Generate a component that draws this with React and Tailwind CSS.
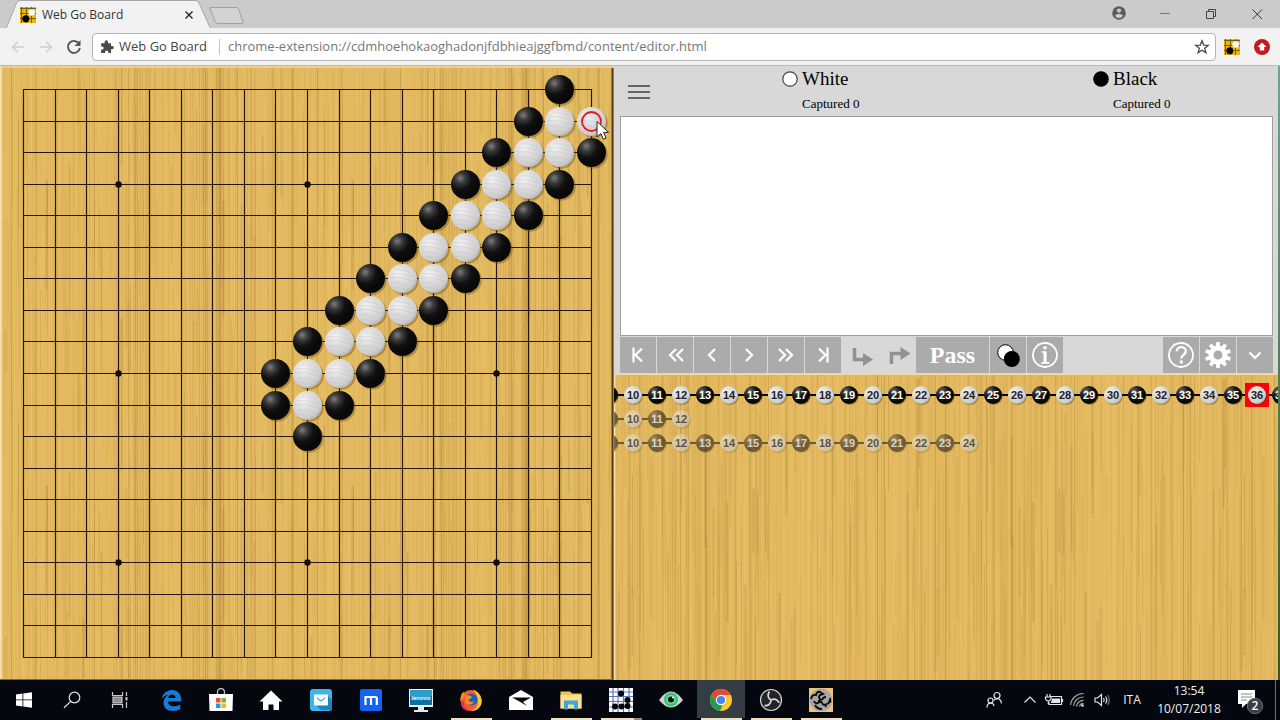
import React from 'react';

function makeRandom(seed) {
  let s = seed;
  return () => {
    s = (s * 16807) % 2147483647;
    return s / 2147483647;
  };
}

const TILE = 306;

function makeStreaks(seed, count) {
  const rnd = makeRandom(seed);
  return Array.from({ length: count }, (_, i) => {
    const long = i % 3 === 0;
    return {
      x: Math.floor(rnd() * TILE) + 0.5,
      y: long ? -10 : rnd() * TILE - 40,
      length: long ? TILE + 20 : 50 + rnd() * 140,
      width: rnd() > 0.7 ? 2 : 1,
      dark: rnd() > 0.35,
      opacity: 0.05 + rnd() * rnd() * 0.26,
    };
  });
}

function Wood({ id, seed }) {
  return (
    <>
      <defs>
        <pattern id={id} width={TILE} height={TILE} patternUnits="userSpaceOnUse">
          <rect width={TILE} height={TILE} fill="#e4ba60" />
          {makeStreaks(seed, 420).map((s, i) => (
            <line key={i} x1={s.x} x2={s.x} y1={s.y} y2={s.y + s.length} strokeWidth={s.width} stroke={s.dark ? '#9c7428' : '#f1cd80'} strokeOpacity={s.opacity} />
          ))}
        </pattern>
      </defs>
      <rect width="100%" height="100%" fill={`url(#${id})`} />
    </>
  );
}

function StoneDefs() {
  return (
    <defs>
      <radialGradient id="blackStone" cx="0.32" cy="0.28" r="0.6">
        <stop offset="0" stopColor="#7d7d7d" />
        <stop offset="0.3" stopColor="#3a3a3a" />
        <stop offset="0.65" stopColor="#101010" />
        <stop offset="1" stopColor="#090909" />
      </radialGradient>
      <radialGradient id="whiteStone" cx="0.36" cy="0.32" r="0.7">
        <stop offset="0" stopColor="#f2f2f2" />
        <stop offset="0.5" stopColor="#dadada" />
        <stop offset="0.85" stopColor="#cfcfcf" />
        <stop offset="1" stopColor="#b9b9b9" />
      </radialGradient>
    </defs>
  );
}

const ORIGIN = 23.5;
const STEP = 568 / 18;
const at = (n) => Math.floor(ORIGIN + n * STEP) + 0.5;

const BLACK = [[17, 0], [16, 1], [8, 10], [10, 10], [9, 11]];
const WHITE = [[17, 1], [18, 1], [9, 10]];
for (let r = 2; r <= 9; r += 1) {
  BLACK.push([17 - r, r], [20 - r, r]);
  WHITE.push([18 - r, r], [19 - r, r]);
}
const STARS = [3, 9, 15].flatMap((c) => [3, 9, 15].map((r) => [c, r]));
const LINES = Array.from({ length: 19 }, (_, i) => i);

function BoardStone({ c, r, color }) {
  const x = at(c);
  const y = at(r);
  return (
    <g>
      <circle cx={x + 1.8} cy={y + 1.8} r="14.5" fill="#6b4a12" fillOpacity="0.4" />
      <circle cx={x} cy={y} r="14.5" fill={color === 'black' ? 'url(#blackStone)' : 'url(#whiteStone)'} />
      {color === 'white' && (
        <path
          d={`M${x - 11} ${y - 5}q11 -1 21 3M${x - 13} ${y - 1}q13 -1 25 4M${x - 12} ${y + 4}q11 0 22 4M${x - 8} ${y + 9}q8 0 13 2M${x - 6} ${y - 9}q8 0 14 3`}
          fill="none"
          stroke="#b4b4b4"
          strokeOpacity="0.35"
          strokeWidth="0.8"
        />
      )}
    </g>
  );
}

function Board() {
  return (
    <svg viewBox="0 0 614 614" className="block aspect-square h-full shrink-0" role="img" aria-label="Go board">
      <StoneDefs />
      <Wood id="boardWood" seed={4711} />
      <path d="M0 1H614" stroke="#e9cf95" strokeWidth="2" />
      <path d="M1 0V614" stroke="#f3dfae" strokeWidth="2" />
      <path d="M612.5 2V614" stroke="#5a3c12" strokeWidth="2" />
      <path d="M0 613.5H614" stroke="#8a6526" />
      {LINES.map((i) => (
        <path key={i} d={`M${at(i)} 23V592M23 ${at(i)}H592`} stroke="#24140a" strokeWidth="1.2" />
      ))}
      {STARS.map(([c, r]) => (
        <circle key={`${c}-${r}`} cx={at(c)} cy={at(r)} r="3.2" fill="#120a04" />
      ))}
      {WHITE.map(([c, r]) => <BoardStone key={`${c}-${r}`} c={c} r={r} color="white" />)}
      {BLACK.map(([c, r]) => <BoardStone key={`${c}-${r}`} c={c} r={r} color="black" />)}
      <circle cx={at(18)} cy={at(1)} r="9.5" fill="none" stroke="#e8141e" strokeWidth="1.8" />
      <path d="M597 55.5v15.5l3.800-3.500 2.600 5.800 2.800-1.200-2.600-5.700h5z" fill="#fff" stroke="#222" strokeWidth="1" />
    </svg>
  );
}

function TreeNode({ n, y, faded }) {
  const x = 19 + (n - 10) * 24;
  const black = n % 2 === 1;
  return (
    <g>
      {n === 36 && <rect x={x - 12} y={y - 12} width="24" height="24" fill="#fb0007" />}
      <g opacity={faded ? 0.52 : 1}>
        <circle cx={x + 0.8} cy={y + 0.8} r="9" fill="#5c410f" fillOpacity="0.5" />
        <circle cx={x} cy={y} r="9" fill={black ? 'url(#blackStone)' : 'url(#whiteStone)'} />
      </g>
      {n > 9 && (
        <text x={x} y={y + 4} textAnchor="middle" fontSize="11" fontWeight="700" fill={black ? '#fff' : '#222'} fillOpacity={faded ? 0.72 : 1}>{n}</text>
      )}
    </g>
  );
}

function TreeRow({ y, last, faded }) {
  const nodes = Array.from({ length: last - 8 }, (_, i) => i + 9);
  return (
    <g>
      {nodes.slice(1).map((n) => (
        <path key={n} d={`M${19 + (n - 11) * 24 + 9} ${y}h6`} stroke="#000" strokeOpacity={faded ? 0.5 : 1} strokeWidth="2" />
      ))}
      {nodes.map((n) => <TreeNode key={n} n={n} y={y} faded={faded} />)}
    </g>
  );
}

function MoveTree() {
  return (
    <div className="min-h-0 flex-1 overflow-hidden border-t border-[#efd9a6]">
      <svg className="block h-full w-full font-['Liberation_Sans',Arial,sans-serif]" role="img" aria-label="Move tree">
        <Wood id="treeWood" seed={9241} />
        <path d="M0 0V1000" stroke="#f3dfae" strokeWidth="3" />
        <TreeRow y={20} last={37} />
        <TreeRow y={44} last={12} faded />
        <TreeRow y={68} last={24} faded />
      </svg>
    </div>
  );
}

function Player({ name, fill }) {
  return (
    <div className="grid grid-cols-[20px_auto] content-start justify-start pl-[126px] pt-px">
      <svg className="mt-1 h-4 w-4" viewBox="0 0 16 16" aria-hidden="true">
        <circle cx="8" cy="8" r="7.2" fill={fill} stroke={fill === '#fff' ? '#444' : '#000'} strokeWidth="1.2" />
      </svg>
      <span className="text-[19px] leading-6">{name}</span>
      <span className="col-start-2 text-[13px] leading-[26px]">Captured 0</span>
    </div>
  );
}

function ToolButton({ label, children, wide }) {
  return (
    <button type="button" aria-label={label} className={`flex h-9 items-center justify-center bg-[#ababab] text-white ${wide ? 'w-[73px]' : 'w-9'}`}>
      {children}
    </button>
  );
}

function Stroke({ d }) {
  return (
    <svg className="h-9 w-9" viewBox="0 0 36 36" fill="none" stroke="currentColor" strokeWidth="2.2" aria-hidden="true">
      <path d={d} />
    </svg>
  );
}

const NAV = [
  ['First move', 'M13.500 10.500V25.500M22 11.500l-6.500 6.500 6.500 6.500'],
  ['Back ten moves', 'M19 12l-6 6 6 6M26 12l-6 6 6 6'],
  ['Previous move', 'M21 12l-6 6 6 6'],
  ['Next move', 'M15 12l6 6-6 6'],
  ['Forward ten moves', 'M11 12l6 6-6 6M18 12l6 6-6 6'],
  ['Last move', 'M22.500 10.500V25.500M14 11.500l6.500 6.500-6.500 6.500'],
];

const TEETH = Array.from({ length: 10 }, (_, i) => i * 36);

function EditorToolbar() {
  return (
    <div className="mt-px flex h-[37px] gap-px pl-[6px] pr-[5px]">
      {NAV.map(([label, d]) => <ToolButton key={label} label={label}><Stroke d={d} /></ToolButton>)}
      <button type="button" disabled aria-label="Previous variation" className="h-9 w-9 text-[#919191]">
        <svg className="h-9 w-9" viewBox="0 0 36 36" aria-hidden="true">
          <path d="M12.500 11V22.500H23" fill="none" stroke="currentColor" strokeWidth="3.500" />
          <path d="M21 16l10 6.500-10 6.500z" fill="currentColor" />
        </svg>
      </button>
      <button type="button" disabled aria-label="Next variation" className="h-9 w-9 text-[#919191]">
        <svg className="h-9 w-9" viewBox="0 0 36 36" aria-hidden="true">
          <path d="M12.500 27V16.500H23" fill="none" stroke="currentColor" strokeWidth="3.500" />
          <path d="M21.500 10l10 6.500-10 6.500z" fill="currentColor" />
        </svg>
      </button>
      <ToolButton wide><span className="text-2xl font-bold">Pass</span></ToolButton>
      <ToolButton label="Edit stones">
        <svg className="h-9 w-9" viewBox="0 0 36 36" aria-hidden="true">
          <circle cx="15.500" cy="15.500" r="7.800" fill="#fff" stroke="#000" />
          <circle cx="21.800" cy="22" r="8" fill="#000" />
        </svg>
      </ToolButton>
      <ToolButton label="Game info">
        <svg className="h-9 w-9" viewBox="0 0 36 36" fill="none" stroke="currentColor" aria-hidden="true">
          <circle cx="18" cy="18" r="12" strokeWidth="1.800" />
          <circle cx="18" cy="10.800" r="1.800" fill="currentColor" stroke="none" />
          <path d="M14.500 15H18.500V25" strokeWidth="1.600" />
          <path d="M18 15V26" strokeWidth="3" />
          <path d="M14 26H22.500" strokeWidth="1.600" />
        </svg>
      </ToolButton>
      <div className="flex-1" />
      <ToolButton label="Help">
        <svg className="h-9 w-9" viewBox="0 0 36 36" fill="none" stroke="currentColor" aria-hidden="true">
          <circle cx="18" cy="18" r="12" strokeWidth="1.800" />
          <path d="M13.800 14.200c0-5.400 9-5.400 9 0 0 3.800-4.500 3.600-4.500 7.300" strokeWidth="2.400" />
          <circle cx="18.300" cy="25" r="1.700" fill="currentColor" stroke="none" />
        </svg>
      </ToolButton>
      <ToolButton label="Settings">
        <svg className="h-9 w-9" viewBox="0 0 36 36" aria-hidden="true">
          <circle cx="18" cy="18" r="7" fill="none" stroke="#fff" strokeWidth="5" />
          {TEETH.map((a) => <path key={a} d="M15.800 10L16.300 5H19.700L20.200 10z" fill="#fff" transform={`rotate(${a} 18 18)`} />)}
        </svg>
      </ToolButton>
      <ToolButton label="More"><Stroke d="M12.500 15.500l5.500 5.500 5.500-5.500" /></ToolButton>
    </div>
  );
}

function EditorPanel() {
  return (
    <section className="flex min-w-0 flex-1 flex-col bg-[#d8d8d8] font-['Liberation_Serif','Times_New_Roman',serif] text-black">
      <header className="flex h-[50px]">
        <button type="button" aria-label="Menu" className="ml-3 mr-1 flex h-12 w-[26px] flex-col items-center justify-center gap-1 pt-1">
          <span className="h-[2px] w-[22px] bg-[#666]" />
          <span className="h-[2px] w-[22px] bg-[#666]" />
          <span className="h-[2px] w-[22px] bg-[#666]" />
        </button>
        <div className="grid flex-1 grid-cols-2">
          <Player name="White" fill="#fff" />
          <Player name="Black" fill="#000" />
        </div>
      </header>
      <textarea aria-label="Comments" className="ml-[6px] mr-[5px] block h-[220px] resize-none border border-[#a0a0a0] bg-white p-1 text-sm" />
      <EditorToolbar />
      <MoveTree />
    </section>
  );
}

function GoIcon({ className }) {
  return (
    <svg className={className} viewBox="0 0 16 16" aria-hidden="true">
      <rect width="16" height="16" fill="#e9b80f" />
      <path d="M1.500 0V16M6.500 0V16M11.500 0V16M0 1.500H16M0 6.500H16M0 11.500H16" stroke="#7a5e08" strokeWidth="1" />
      <circle cx="11.700" cy="5.500" r="3.300" fill="#fff" />
      <circle cx="5.800" cy="11.800" r="3.500" fill="#000" />
    </svg>
  );
}

function WindowButton({ label, children }) {
  return (
    <button type="button" aria-label={label} className="flex h-[27px] w-[46px] items-center justify-center">
      <svg className="h-4 w-4" viewBox="0 0 16 16" fill="none" stroke="#333" aria-hidden="true">{children}</svg>
    </button>
  );
}

function TabStrip() {
  return (
    <div className="flex h-7 bg-[#cbcbcb]">
      <div className="relative ml-[5px] flex h-[29px] w-[208px] items-center pl-[15px] pr-4">
        <svg className="absolute inset-0 h-full w-full" viewBox="0 0 208 29" preserveAspectRatio="none" aria-hidden="true">
          <path d="M0 29L1.500 27.500L11.500 3Q12.500 .5 15 .5H190.500Q193 .5 194 3L205 27.500L207 29z" fill="#f2f2f2" stroke="#a8a8a8" />
          <path d="M0 29H208" stroke="#f2f2f2" strokeWidth="2" />
        </svg>
        <GoIcon className="relative h-4 w-4" />
        <span className="relative ml-[6px] flex-1 text-xs text-[#333]">Web Go Board</span>
        <button type="button" aria-label="Close tab" className="relative flex h-4 w-4 items-center justify-center">
          <svg className="h-2 w-2" viewBox="0 0 8 8" stroke="#222" strokeWidth="1.400" aria-hidden="true"><path d="M.5 .5l7 7M7.500 .5l-7 7" /></svg>
        </button>
      </div>
      <button type="button" aria-label="New tab" className="-ml-1 flex items-center pt-[2px]">
        <svg className="h-[17px] w-[35px]" viewBox="0 0 35 17" aria-hidden="true">
          <path d="M1 1Q0 .5 1.500 .5H27Q29 .5 29.500 2L34 15Q34.500 16.500 33 16.500H9Q7 16.500 6.300 15z" fill="#d3d3d3" stroke="#a0a0a0" />
        </svg>
      </button>
      <div className="flex-1" />
      <button type="button" aria-label="Profile" className="flex h-[25px] w-[46px] items-center justify-center">
        <svg className="h-[14px] w-[14px]" viewBox="0 0 14 14" aria-hidden="true">
          <circle cx="7" cy="7" r="6.800" fill="#5b5b5b" />
          <circle cx="7" cy="4.600" r="2.100" fill="#cbcbcb" />
          <path d="M2.800 9.700Q7 6 11.200 9.700Q9.500 12 7 12T2.800 9.700z" fill="#cbcbcb" />
        </svg>
      </button>
      <WindowButton label="Minimize"><path d="M3 7.500H13" stroke="#777" /></WindowButton>
      <WindowButton label="Restore"><path d="M3.500 5.500H10.500V12.500H3.500zM5.500 5.500V3.500H12.500V10.500H10.500" stroke="#444" /></WindowButton>
      <WindowButton label="Close"><path d="M3.500 3.500l9.500 9.500M13 3.500l-9.500 9.500" /></WindowButton>
    </div>
  );
}

function AddressBar() {
  return (
    <div className="flex h-[38px] items-center border-b border-[#b8b8b8] bg-[#f2f2f2] pl-1">
      <button type="button" disabled aria-label="Back" className="flex h-7 w-7 items-center justify-center">
        <svg className="h-4 w-4" viewBox="0 0 16 16" fill="none" stroke="#d0d0d0" strokeWidth="1.700" aria-hidden="true"><path d="M14.500 8H2.500M8 2.500L2.500 8L8 13.500" /></svg>
      </button>
      <button type="button" disabled aria-label="Forward" className="flex h-7 w-7 items-center justify-center">
        <svg className="h-4 w-4" viewBox="0 0 16 16" fill="none" stroke="#d0d0d0" strokeWidth="1.700" aria-hidden="true"><path d="M1.500 8H13.500M8 2.500L13.500 8L8 13.500" /></svg>
      </button>
      <button type="button" aria-label="Reload" className="flex h-7 w-7 items-center justify-center">
        <svg className="h-4 w-4" viewBox="0 0 16 16" aria-hidden="true">
          <path d="M13 4.600A6 6 0 1 0 13.900 9" fill="none" stroke="#555" strokeWidth="1.900" />
          <path d="M14.500 1V7H8.500z" fill="#555" />
        </svg>
      </button>
      <div className="ml-1 flex h-7 flex-1 items-center rounded-sm border border-[#b5b5b5] bg-white pl-[7px] pr-[5px]">
        <svg className="h-3.5 w-3.5" viewBox="0 0 14 14" fill="#4a4a4a" aria-hidden="true">
          <path d="M4.600 1.900a1.700 1.700 0 0 1 3.400 0V3.200H11V6h1.200a1.600 1.600 0 0 1 0 3.200H11V13H8.300v-1a1.600 1.600 0 0 0-3.200 0V13H1.200V9.600H2.100a1.600 1.600 0 0 0 0-3.200H1.200V3.200H4.600z" />
        </svg>
        <span className="ml-[5px] text-[13px] text-[#444]">Web Go Board</span>
        <span className="ml-3 h-4 w-px bg-[#c4c4c4]" />
        <input
          aria-label="Address"
          defaultValue="chrome-extension://cdmhoehokaoghadonjfdbhieajggfbmd/content/editor.html"
          className="ml-2 min-w-0 flex-1 bg-transparent text-[13px] text-[#777] outline-none"
        />
        <button type="button" aria-label="Bookmark this page" className="flex h-4 w-4 items-center justify-center">
          <svg className="h-4 w-4" viewBox="0 0 16 16" fill="none" stroke="#444" strokeWidth="1.300" aria-hidden="true">
            <path d="M8 1.800L9.700 6.100L14.300 6.400L10.700 9.300L11.900 13.800L8 11.300L4.100 13.800L5.300 9.300L1.700 6.400L6.300 6.100z" />
          </svg>
        </button>
      </div>
      <button type="button" aria-label="Web Go Board" className="ml-2"><GoIcon className="h-4 w-4" /></button>
      <button type="button" aria-label="Update" className="ml-3.5 mr-2.5">
        <svg className="h-4 w-4" viewBox="0 0 16 16" aria-hidden="true">
          <circle cx="8" cy="8" r="8" fill="#c8181e" />
          <path d="M8 3.500L12.500 8H10.200V11.500H5.800V8H3.500z" fill="#fff" />
        </svg>
      </button>
    </div>
  );
}

const APPS = [
  ['Edge', '', <path key="p" d="M2.500 11C4 4.500 9 2 13 2c6 0 9.500 4.500 9.300 11.400H9c.3 3.400 3 4.900 6 4.900 2.400 0 4.600-.7 6.300-1.700v4.500C19.500 22.300 17 23 14 23 8 23 4.500 19.500 4.500 14.500 4.500 11 6.500 8.500 9.500 7 7 7 4 8.500 2.500 11zM9.200 10H16.500C16.500 7.800 15 6.500 13 6.500S9.600 8 9.200 10z" fill="#1879d6" />],
  ['Store', '', <g key="g"><path d="M8.500 7V4a3.500 3.500 0 0 1 7 0V7" fill="none" stroke="#bbb" strokeWidth="1.300" /><path d="M0 6H24L23.500 23H.5z" fill="#fff" /><path d="M7 10h4.500v4.500H7z" fill="#e8502b" /><path d="M12.500 10H17v4.500h-4.500z" fill="#7fb52b" /><path d="M7 15.500h4.500V20H7z" fill="#2799dc" /><path d="M12.500 15.500H17V20h-4.500z" fill="#f6b51e" /></g>],
  ['Home', '', <path key="p" d="M12 2.500L23.500 13.500H20V22H14.500V16.500H9.500V22H4V13.500H.5z" fill="#fff" />],
  ['Shop', '', <g key="g"><rect x="1" y="1" width="22" height="22" rx="3" fill="#3db6ea" /><path d="M18 7L23 12V22H12L7 17z" fill="#1d86bd" /><rect x="5" y="6.500" width="14" height="11" rx="1" fill="#fff" /><path d="M8 9.500Q12 16 16 9.500" fill="none" stroke="#3aa6d4" strokeWidth="1.300" /></g>],
  ['Maxthon', '', <g key="g"><rect x="1" y="1" width="22" height="22" rx="2" fill="#1463f3" /><path d="M6.500 17V9H16.500Q17.800 9 17.800 10.500V17M12 17V9" fill="none" stroke="#fff" strokeWidth="2.200" /></g>],
  ['Lenovo', '', <g key="g"><rect x="0" y="1" width="24" height="18" fill="#eef3f6" /><rect x="1" y="2" width="22" height="15" fill="#0a6fa5" /><path d="M1 2H23V8Q12 12 1 8z" fill="#2d9ccb" /><text x="12" y="12" textAnchor="middle" fontSize="6" fontWeight="700" fontStyle="italic" fill="#fff">lenovo</text><path d="M9 19H15V22H19V24H5V22H9z" fill="#e5e9ec" /></g>],
  ['Firefox', 'line', <g key="g"><circle cx="12" cy="12.500" r="10.500" fill="#f75a2c" /><path d="M14 1.500C20 4 24 10 22.500 15.500 21 21 16 23.500 11 23c5-1 8-5 8-9 0-5-2-9-5-12.500z" fill="#ffc72e" /><path d="M1.500 13C1 8 3 5 4.500 3.500c0 2 1 2.500 2 3z" fill="#fb8b24" /><path d="M2 14C1 20 7 23.500 12 23 6 22 4 17 5.500 13z" fill="#e9266a" /><circle cx="12.500" cy="11.500" r="6" fill="#1b62bf" /><path d="M6 8c3-1.500 5 0 7 1-1 2-3 1.500-3.500 3 1 2.500 4 2.500 6 1-1.500 4-7 5-9 1.500C5.500 12.500 5.500 10 6 8z" fill="#fb8a26" /></g>],
  ['Mail', '', <g key="g"><path d="M0 9L12 2L24 9V22H0z" fill="#fff" /><path d="M3 9.500H22L14 14L18 18L10.500 13.500z" fill="#05070c" /></g>],
  ['File Explorer', 'line', <g key="g"><path d="M1.500 3.500H11L13 5.500H22.500V20.500H1.500z" fill="#f0c45a" /><path d="M1.500 7H22.500V20.500H1.500z" fill="#fde08c" /><path d="M5 21.500V12.500H19V21.500H15V16.500H9V21.500z" fill="#3ba7dc" /></g>],
  ['Go client', 'stack', <g key="g"><rect x="0" y="0" width="24" height="24" fill="#fff" /><path d="M4 0V24M9 0V24M14.500 0V24M20 0V24M0 4H24M0 8.500H24M0 13.500H24M0 19H24" stroke="#5b77c7" strokeWidth="1.200" /><circle cx="12" cy="5.500" r="3" /><circle cx="18.500" cy="12" r="3" /><circle cx="6" cy="18.500" r="3" /><circle cx="12.500" cy="18.500" r="3" /><circle cx="18.500" cy="18" r="3" /></g>],
  ['Viewer', '', <g key="g"><path d="M0 12Q12-5 24 12Q12 27 0 12z" fill="#cdd5d0" /><circle cx="12" cy="11.500" r="7" fill="#40bf77" /><circle cx="12" cy="11.500" r="4.600" fill="#6ce09b" /><circle cx="12" cy="11.500" r="3" fill="#07150d" /><circle cx="14" cy="9.500" r="1" fill="#fff" /></g>],
  ['Chrome', 'active', <g key="g"><circle cx="12" cy="12" r="11" fill="#f7c92c" /><path d="M12 1A11 11 0 0 1 21.700 7H12L7.500 14.500L2.300 6.700A11 11 0 0 1 12 1z" fill="#df4a3c" /><path d="M2.300 6.700L7.500 14.500L14 16L11 23A11 11 0 0 1 2.300 6.700z" fill="#1f9d58" /><circle cx="12" cy="12" r="5.200" fill="#fff" /><circle cx="12" cy="12" r="4.100" fill="#4487f4" /></g>],
  ['OBS', 'line', <g key="g"><circle cx="12" cy="12" r="10.500" fill="#24232a" stroke="#d4d4d4" strokeWidth="1.200" /><g fill="none" stroke="#d9d9d9" strokeWidth="1.700"><path d="M12 12C9 10 8 7 10.500 3.500" /><path d="M12 12C9 10 8 7 10.500 3.500" transform="rotate(120 12 12)" /><path d="M12 12C9 10 8 7 10.500 3.500" transform="rotate(240 12 12)" /></g></g>],
  ['Dragon Go', 'line', <g key="g"><rect x="0" y="0" width="24" height="24" fill="#efc27a" /><circle cx="12" cy="12" r="11.300" fill="#a6a6a6" /><path d="M2 11q1-5 5-4 1-4 4-3l3 2-3 1q-2 2 0 4t-2 4q-3 1-4-2M9 13q3-1 4 2t5 1 3-6M13 12q1-3 4-3M6 17q2 4 7 4M20 12l2 2M16 16l1 3" fill="none" stroke="#0c0c0c" strokeWidth="1.900" /></g>],
];

function TaskbarApp({ label, state, children }) {
  return (
    <button type="button" aria-label={label} className="flex h-10 w-[50px] flex-col items-center">
      <span className={`flex h-[38px] w-12 items-center justify-center pt-[2px] ${state === 'active' ? 'bg-[#343c44]' : ''}`}>
        <svg className="h-6 w-6 font-['Liberation_Sans',Arial,sans-serif]" viewBox="0 0 24 24" aria-hidden="true">{children}</svg>
      </span>
      {state && (
        <span className="flex h-[2px] w-[41px] bg-[#f3dfbb]">
          {state === 'stack' && <span className="ml-auto h-full w-2 bg-[#8f8a80]" />}
        </span>
      )}
    </button>
  );
}

function Tray({ label, className, children }) {
  return (
    <button type="button" aria-label={label} className={`flex h-10 items-center justify-center ${className}`}>
      <svg className="h-5 w-5" viewBox="0 0 20 20" fill="none" stroke="#e6e6e6" strokeWidth="1.200" aria-hidden="true">{children}</svg>
    </button>
  );
}

function Taskbar() {
  return (
    <footer className="flex h-10 shrink-0 bg-[#04070e] text-[#f0f0f0]">
      <Tray label="Start" className="w-12">
        <path d="M2 4.400L8.500 3.500V9.500H2zM9.300 3.400L18 2.200V9.500H9.300zM2 10.300H8.500V16.500L2 15.600zM9.300 10.300H18V17.800L9.300 16.600z" fill="#fff" stroke="none" />
      </Tray>
      <Tray label="Search" className="w-12"><circle cx="12.500" cy="7.500" r="5.300" /><path d="M8.800 11.400L2 17.800" /></Tray>
      <Tray label="Task view" className="mr-[2px] w-12">
        <path d="M2.500 2V5.500H12.500V2M2.500 18V14.500H12.500V18M16.500 2V6M16.500 12V18" stroke="#c9c9c9" />
        <path d="M3 7H12V13H3z" fill="#8e8e8e" stroke="#c9c9c9" />
        <path d="M15.500 7H17.500V10.500H15.500z" fill="#c9c9c9" stroke="none" />
      </Tray>
      {APPS.map(([label, state, icon]) => <TaskbarApp key={label} label={label} state={state}>{icon}</TaskbarApp>)}
      <div className="flex-1" />
      <Tray label="People" className="w-12">
        <circle cx="13" cy="5.500" r="3" /><circle cx="6.500" cy="10.500" r="2.500" /><path d="M3 17.500Q3 13.200 6.500 13.200T9.800 16M10 10.500Q11 8.700 13.200 8.700 17 9 17.500 13.500" />
      </Tray>
      <Tray label="Show hidden icons" className="w-6"><path d="M4.500 12.500L10 7L15.500 12.500" /></Tray>
      <Tray label="Battery" className="w-6">
        <path d="M6 6.500H17.500V14.500H5V12" /><path d="M8 8.500H16V13H7z" fill="#e6e6e6" stroke="none" /><path d="M18.500 9V12" /><path d="M3 4V7M6 4V7M1.500 7H7V9Q6 11 4.300 11T1.500 9zM4.300 11V14" />
      </Tray>
      <Tray label="Network" className="w-6">
        <path d="M2.500 15A13 13 0 0 1 15.500 3.500M5.500 16A10 10 0 0 1 15.500 7M8.500 16.500A7 7 0 0 1 15.500 10.300M11.500 16.500A4 4 0 0 1 15.500 13.300" stroke="#a8a8a8" /><circle cx="14.500" cy="15.500" r="1.300" fill="#e6e6e6" stroke="none" />
      </Tray>
      <Tray label="Volume" className="w-6"><path d="M3 8H5.500L9.500 4.500V15.500L5.500 12H3zM11.500 8Q13 10 11.500 12M13.500 6.500Q16 10 13.500 13.500" /><path d="M15.500 5Q19 10 15.500 15" stroke="#777" /></Tray>
      <button type="button" className="w-9 text-xs">ITA</button>
      <button type="button" className="flex w-[78px] flex-col items-center justify-center text-xs leading-[18px]">
        <span>13:54</span>
        <span>10/07/2018</span>
      </button>
      <button type="button" aria-label="Notifications" className="flex w-[47px] items-center justify-center">
        <svg className="h-7 w-7" viewBox="0 0 28 28" aria-hidden="true">
          <path d="M0 4H17V18H8L4 22V18H0z" fill="#fff" />
          <path d="M3 8H14M3 11H14M3 14H9" stroke="#888" />
          <circle cx="17" cy="20" r="7.700" fill="#3a3d42" stroke="#6a6d70" />
          <text x="17" y="24" textAnchor="middle" fontSize="12" fontWeight="600" fill="#fff">2</text>
        </svg>
      </button>
      <button type="button" aria-label="Show desktop" className="w-[5px] border-l border-[#6b6e73]" />
    </footer>
  );
}

export default function App() {
  return (
    <div className="flex h-screen flex-col overflow-hidden bg-[#d8d8d8] font-['Open_Sans','Noto_Sans',sans-serif]">
      <TabStrip />
      <AddressBar />
      <main className="flex min-h-0 flex-1">
        <Board />
        <EditorPanel />
        <div className="w-[2px] bg-gradient-to-b from-[#6da588] to-[#2f5a2a]" />
      </main>
      <Taskbar />
    </div>
  );
}
